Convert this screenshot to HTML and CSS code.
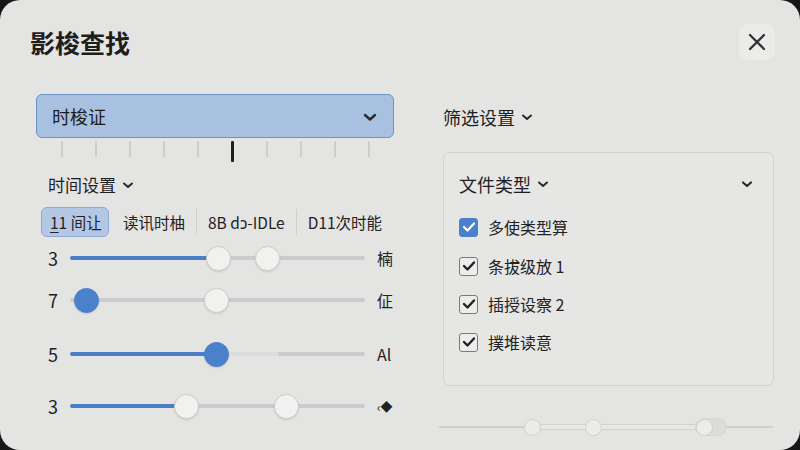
FILE: index.html
```html
<!DOCTYPE html>
<html lang="zh">
<head>
<meta charset="utf-8">
<title>影梭查找</title>
<link rel="stylesheet" href="styles.css">
</head>
<body>
<div class="dialog">
  <div class="header">
    <h1 class="title">影梭查找</h1>
    <button class="close" aria-label="关闭">
      <svg width="20" height="20" viewBox="0 0 20 20"><path d="M3 3 L17 17 M17 3 L3 17" stroke="#333" stroke-width="2.3" stroke-linecap="round" fill="none"/></svg>
    </button>
  </div>
  <div class="body">
    <div class="left">
      <div class="select">
        <span>时梭证</span>
        <svg class="chev" width="14" height="10" viewBox="0 0 14 10"><path d="M2 3 L7 7.5 L12 3" stroke="#2a2a2a" stroke-width="2.4" fill="none" stroke-linecap="round" stroke-linejoin="round"/></svg>
      </div>
      <div class="ticks">
        <i></i><i></i><i></i><i></i><i></i><i class="on"></i><i></i><i></i><i></i><i></i>
      </div>
      <div class="section">时间设置
        <svg class="chev-s" width="12" height="8" viewBox="0 0 12 8"><path d="M2 2.5 L6 6 L10 2.5" stroke="#2a2a2a" stroke-width="2" fill="none" stroke-linecap="round" stroke-linejoin="round"/></svg>
      </div>
      <div class="tabs">
        <span class="tab active"><u>1</u>1 间让</span>
        <span class="tab">读讯时柚</span>
        <span class="sep"></span>
        <span class="tab">8B dɔ-IDLe</span>
        <span class="sep"></span>
        <span class="tab">D11次时能</span>
      </div>
      <div class="srow r1">
        <span class="num">3</span>
        <div class="track">
          <div class="fill" style="width:50.5%"></div>
          <span class="thumb" style="left:50.5%"></span>
          <span class="thumb" style="left:66.8%"></span>
        </div>
        <span class="end">楠</span>
      </div>
      <div class="srow r2">
        <span class="num">7</span>
        <div class="track">
          <span class="thumb blue" style="left:5.5%"></span>
          <span class="thumb" style="left:49.5%"></span>
        </div>
        <span class="end">佂</span>
      </div>
      <div class="srow r3">
        <span class="num">5</span>
        <div class="track">
          <div class="fill" style="width:49.5%"></div>
          <div class="ghost" style="left:49.5%;width:21%"></div>
          <span class="thumb blue" style="left:49.5%"></span>
        </div>
        <span class="end">Al</span>
      </div>
      <div class="srow r4">
        <span class="num">3</span>
        <div class="track">
          <div class="fill" style="width:39.5%"></div>
          <span class="thumb" style="left:39.5%"></span>
          <span class="thumb" style="left:73.5%"></span>
        </div>
        <span class="end small">‹◆</span>
      </div>
    </div>
    <div class="right">
      <div class="section big">筛选设置
        <svg class="chev-s" width="12" height="8" viewBox="0 0 12 8"><path d="M2 2.5 L6 6 L10 2.5" stroke="#2a2a2a" stroke-width="2" fill="none" stroke-linecap="round" stroke-linejoin="round"/></svg>
      </div>
      <div class="panel">
        <div class="panel-head">
          <span class="ph-title">文件类型
            <svg class="chev-s" width="12" height="8" viewBox="0 0 12 8"><path d="M2 2.5 L6 6 L10 2.5" stroke="#2a2a2a" stroke-width="2" fill="none" stroke-linecap="round" stroke-linejoin="round"/></svg>
          </span>
          <svg width="12" height="8" viewBox="0 0 12 8"><path d="M2 2.5 L6 6 L10 2.5" stroke="#2a2a2a" stroke-width="2.2" fill="none" stroke-linecap="round" stroke-linejoin="round"/></svg>
        </div>
        <ul class="checks">
          <li class="first"><span class="cb blue"><svg width="14" height="12" viewBox="0 0 14 12"><path d="M2 6 L5.5 9.5 L12 2.5" stroke="#fff" stroke-width="2.2" fill="none" stroke-linecap="round" stroke-linejoin="round"/></svg></span>多使类型算</li>
          <li><span class="cb"><svg width="14" height="12" viewBox="0 0 14 12"><path d="M2 6 L5.5 9.5 L12 2.5" stroke="#222" stroke-width="2.4" fill="none" stroke-linecap="round" stroke-linejoin="round"/></svg></span>条拔级放 1</li>
          <li><span class="cb"><svg width="14" height="12" viewBox="0 0 14 12"><path d="M2 6 L5.5 9.5 L12 2.5" stroke="#222" stroke-width="2.4" fill="none" stroke-linecap="round" stroke-linejoin="round"/></svg></span>插授设察 2</li>
          <li><span class="cb"><svg width="14" height="12" viewBox="0 0 14 12"><path d="M2 6 L5.5 9.5 L12 2.5" stroke="#222" stroke-width="2.4" fill="none" stroke-linecap="round" stroke-linejoin="round"/></svg></span>撲堆读意</li>
        </ul>
      </div>
      <div class="range">
        <div class="range-seg" style="left:28%;width:53.5%"></div>
        <span class="rthumb pill" style="left:81.5%"></span>
        <span class="rthumb" style="left:28%"></span>
        <span class="rthumb" style="left:46.3%"></span>
        <span class="rthumb" style="left:79.5%"></span>
      </div>
    </div>
  </div>
</div>
</body>
</html>
```

FILE: styles.css
```css
* { box-sizing: border-box; }
html, body { margin: 0; padding: 0; }
body {
  width: 800px;
  height: 450px;
  background: #161616;
  overflow: hidden;
  font-family: "Noto Sans CJK SC", "Noto Sans", sans-serif;
  color: #222;
}
.dialog {
  width: 800px;
  height: 450px;
  background: #e4e4e3;
  border-radius: 20px;
  padding: 25px 25px 0 30px;
  display: flex;
  flex-direction: column;
}
.header {
  display: flex;
  align-items: center;
  justify-content: space-between;
  height: 34px;
}
.title {
  margin: 0;
  font-size: 25px;
  font-weight: 700;
  line-height: 34px;
  color: #1e1e1e;
  letter-spacing: 0;
}
.close {
  width: 36px;
  height: 36px;
  border: none;
  border-radius: 9px;
  background: #ebebea;
  display: flex;
  align-items: center;
  justify-content: center;
  padding: 0;
  margin-right: 0;
}
.body {
  display: flex;
  margin-top: 35px;
  padding-left: 6px;
}
.left {
  width: 358px;
  display: flex;
  flex-direction: column;
}
.select {
  height: 44px;
  background: #a9c1e1;
  border: 1.5px solid #6f93c6;
  border-radius: 6px;
  display: flex;
  align-items: center;
  justify-content: space-between;
  padding: 0 16px 0 15px;
  font-size: 18px;
  color: #1c1c1c;
}
.chev { margin-top: 1px; }
.ticks {
  display: flex;
  justify-content: space-between;
  align-items: flex-start;
  padding: 0 24px 0 25px;
  height: 24px;
  padding-top: 3px;
}
.ticks i {
  display: block;
  width: 2px;
  height: 16px;
  background: #cdcdcd;
}
.ticks i.on {
  width: 3px;
  height: 21px;
  background: #1f1f1f;
  border-radius: 1px;
}
.section {
  display: flex;
  align-items: center;
  gap: 6px;
  font-size: 17px;
  line-height: 24px;
  padding-left: 12px;
  margin-top: 11px;
  color: #1f1f1f;
}
.tabs {
  display: flex;
  align-items: center;
  margin-top: 10px;
  padding-left: 5px;
  height: 30px;
  font-size: 15.5px;
}
.tab {
  padding: 0 7px;
  white-space: nowrap;
  color: #222;
}
.tab.active {
  height: 30px;
  display: flex;
  align-items: center;
  background: #b4c8e6;
  border: 1.5px solid #8eaad4;
  border-radius: 6px;
  width: 68px;
  padding: 0 8px;
  margin-right: 7px;
}
.tab u { text-decoration-thickness: 1px; text-underline-offset: 3px; }
.sep {
  width: 1px;
  height: 26px;
  background: #cfcfcf;
  margin: 0 4px;
}
.srow {
  display: flex;
  align-items: center;
  height: 28px;
  padding-left: 12px;
}
.srow.r1 { margin-top: 7px; }
.srow.r2 { margin-top: 14px; }
.srow.r3 { margin-top: 26px; }
.srow.r4 { margin-top: 24px; }
.num {
  width: 22px;
  font-size: 18px;
  color: #222;
}
.track {
  position: relative;
  width: 295px;
  height: 4px;
  background: #cbcbcb;
  border-radius: 2px;
}
.fill {
  position: absolute;
  left: 0;
  top: 0;
  height: 4px;
  background: #4a7ec8;
  border-radius: 2px;
}
.ghost {
  position: absolute;
  top: 0;
  height: 4px;
  background: #dcdcdc;
}
.thumb {
  position: absolute;
  top: 2px;
  width: 25px;
  height: 25px;
  margin: -12.5px 0 0 -12.5px;
  border-radius: 50%;
  background: #f1f1f0;
  border: 1.5px solid #cfcfcf;
  box-shadow: 0 1px 2px rgba(0,0,0,0.12);
}
.thumb.blue {
  background: #4a80cc;
  border-color: #4a80cc;
}
.end {
  margin-left: 12px;
  font-size: 16px;
  color: #222;
}
.end.small { font-size: 12px; }
.right {
  margin-left: 49px;
  width: 331px;
  display: flex;
  flex-direction: column;
}
.section.big {
  font-size: 18px;
  padding-left: 0;
  margin-top: 10px;
  line-height: 26px;
}
.panel {
  margin-top: 22px;
  height: 234px;
  border: 1.5px solid #d3d3d2;
  border-radius: 7px;
  background: #e6e6e5;
  padding: 16px 20px 0 15px;
}
.panel-head {
  display: flex;
  align-items: center;
  justify-content: space-between;
  height: 30px;
}
.ph-title {
  display: flex;
  align-items: center;
  gap: 6px;
  font-size: 18px;
  color: #1f1f1f;
}
.checks {
  list-style: none;
  margin: 0;
  padding: 0;
}
.checks li {
  display: flex;
  align-items: center;
  gap: 10px;
  height: 38px;
  font-size: 16px;
  color: #222;
}
.checks li.first { margin-top: 8px; height: 40px; }
.cb {
  width: 19px;
  height: 19px;
  border-radius: 3px;
  border: 1.5px solid #7a7a7a;
  background: #ededec;
  display: flex;
  align-items: center;
  justify-content: center;
}
.cb.blue {
  background: #4a80cc;
  border-color: #4a80cc;
}
.range {
  position: relative;
  margin-top: 40px;
  margin-left: -4px;
  width: 334px;
  height: 2px;
  background: #cfcfce;
}
.range-seg {
  position: absolute;
  top: -2px;
  height: 6px;
  background: #e8e8e7;
  border: 1px solid #d2d2d1;
  border-radius: 3px;
}
.rthumb {
  position: absolute;
  top: 1px;
  width: 17px;
  height: 17px;
  margin: -8.5px 0 0 -8.5px;
  border-radius: 50%;
  background: #ececeb;
  border: 1.5px solid #d0d0cf;
}
.rthumb.pill {
  width: 32px;
  height: 18px;
  margin: -9px 0 0 -16px;
  border-radius: 9px;
  background: #dcdcdb;
  border-color: #d6d6d5;
}
```
